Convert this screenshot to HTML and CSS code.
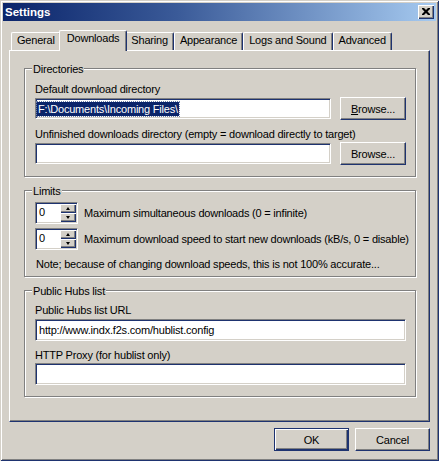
FILE: index.html
```html
<!DOCTYPE html>
<html>
<head>
<meta charset="utf-8">
<link rel="stylesheet" href="styles.css">
</head>
<body>
<div class="window">
  <div class="titlebar">
    <span class="title">Settings</span>
    <div class="close">
      <svg width="8" height="7" viewBox="0 0 8 7"><path d="M0 0h2l2 2 2-2h2v1l-2.5 2.5 2.5 2.5v1h-2l-2-2-2 2h-2v-1l2.5-2.5-2.5-2.5z" fill="#000"/></svg>
    </div>
  </div>
  <div class="body">
    <div class="tabs">
      <div class="tab">General</div>
      <div class="tab active">Downloads</div>
      <div class="tab">Sharing</div>
      <div class="tab">Appearance</div>
      <div class="tab">Logs and Sound</div>
      <div class="tab">Advanced</div>
    </div>
    <div class="panel">
      <div class="group g-dirs">
        <span class="legend">Directories</span>
        <div class="label">Default download directory</div>
        <div class="row">
          <div class="edit edit-dir"><span class="sel">F:\Documents\Incoming Files\</span></div>
          <div class="btn browse"><u>B</u>rowse...</div>
        </div>
        <div class="label label-gap">Unfinished downloads directory (empty = download directly to target)</div>
        <div class="row">
          <div class="edit edit-dir"></div>
          <div class="btn browse">Browse...</div>
        </div>
      </div>
      <div class="group g-limits">
        <span class="legend">Limits</span>
        <div class="spin-row">
          <div class="spin"><span class="spin-val">0</span><div class="updown"><div class="ud up"><i></i></div><div class="ud down"><i></i></div></div></div>
          <span class="spin-label">Maximum simultaneous downloads (0 = infinite)</span>
        </div>
        <div class="spin-row">
          <div class="spin"><span class="spin-val">0</span><div class="updown"><div class="ud up"><i></i></div><div class="ud down"><i></i></div></div></div>
          <span class="spin-label">Maximum download speed to start new downloads (kB/s, 0 = disable)</span>
        </div>
        <div class="label note">Note; because of changing download speeds, this is not 100% accurate...</div>
      </div>
      <div class="group g-hubs">
        <span class="legend">Public Hubs list</span>
        <div class="label">Public Hubs list URL</div>
        <div class="edit edit-wide url">http://www.indx.f2s.com/hublist.config</div>
        <div class="label label-gap">HTTP Proxy (for hublist only)</div>
        <div class="edit edit-wide"></div>
      </div>
    </div>
    <div class="buttons">
      <div class="btn dlg default">OK</div>
      <div class="btn dlg">Cancel</div>
    </div>
  </div>
</div>
</body>
</html>
```
FILE: styles.css
```css
* { box-sizing: border-box; }
body {
  margin: 0;
  font-family: "Liberation Sans", Arial, sans-serif;
  font-size: 11px;
  letter-spacing: -0.2px;
  color: #000;
  background: #d4d0c8;
}
.window {
  width: 439px;
  height: 461px;
  background: #d4d0c8;
  padding: 3px;
  display: flex;
  flex-direction: column;
  box-shadow: inset 1px 1px 0 #d4d0c8, inset -1px -1px 0 #1e3370, inset 2px 2px 0 #fff, inset -2px -2px 0 #808080;
}
.titlebar {
  height: 18px;
  flex: none;
  display: flex;
  align-items: center;
  justify-content: space-between;
  padding: 0 2px 0 2px;
  background: linear-gradient(to right, #0a246a 0%, #3a5a98 40%, #a6caf0 100%);
}
.title {
  color: #fff;
  font-weight: bold;
  letter-spacing: 0;
  font-size: 11.5px;
}
.close {
  width: 16px;
  height: 14px;
  background: #d4d0c8;
  box-shadow: inset 1px 1px 0 #fff, inset -1px -1px 0 #1e3370, inset -2px -2px 0 #808080;
  display: flex;
  align-items: center;
  justify-content: center;
  padding-bottom: 1px;
}
.body {
  flex: 1;
  padding: 9px 6px 0 6px;
  display: flex;
  flex-direction: column;
}
.tabs {
  display: flex;
  align-items: flex-end;
  height: 20px;
  padding-left: 2px;
  position: relative;
  z-index: 1;
}
.tab {
  height: 18px;
  padding: 0 5px;
  line-height: 14px;
  border-top: 1px solid #fff;
  border-left: 1px solid #fff;
  border-right: 1px solid #1e3370;
  box-shadow: inset -1px 0 0 #808080;
  border-radius: 2px 2px 0 0;
  background: #d4d0c8;
  white-space: nowrap;
}
.tab.active {
  height: 21px;
  margin: 0 -2px -1px -2px;
  padding: 0 7px;
  position: relative;
  z-index: 2;
}
.panel {
  height: 372px;
  flex: none;
  border-top: 1px solid #fff;
  border-left: 1px solid #fff;
  border-right: 1px solid #1e3370;
  border-bottom: 1px solid #1e3370;
  box-shadow: inset -1px -1px 0 #808080;
  padding: 17px 0 0 14px;
}
.group {
  position: relative;
  width: 392px;
  border: 1px solid #808080;
  box-shadow: inset 1px 1px 0 #fff, 1px 1px 0 #fff;
  padding-left: 10px;
}
.group + .group { margin-top: 13px; }
.g-dirs { padding-top: 13px; padding-bottom: 11px; }
.g-limits { padding-top: 11px; padding-bottom: 5px; }
.g-hubs { padding-top: 12px; padding-bottom: 11px; }
.legend {
  position: absolute;
  top: -6px;
  left: 7px;
  padding: 0 1px;
  line-height: 13px;
  background: #d4d0c8;
}
.label {
  line-height: 14px;
  height: 14px;
  white-space: nowrap;
  margin-bottom: 1px;
}
.label-gap { margin-top: 7px; }
.g-hubs .label:first-of-type { margin-bottom: 2px; }
.row {
  display: flex;
  align-items: center;
  gap: 9px;
  height: 23px;
}
.edit {
  height: 21px;
  background: #fff;
  border: 1px solid;
  border-color: #808080 #fff #fff #808080;
  box-shadow: inset 1px 1px 0 #1e3370, inset -1px -1px 0 #d4d0c8;
  padding: 0 2px;
  line-height: 19px;
  white-space: nowrap;
  overflow: hidden;
}
.edit-dir { width: 296px; }
.edit-wide { width: 371px; height: 22px; line-height: 20px; }
.url { padding-left: 3px; }
.sel {
  display: inline-block;
  background: #0a246a;
  color: #fff;
  line-height: 14px;
  margin-left: -1px;
  padding: 0 1px;
  vertical-align: middle;
  outline: 1px dotted #6d7fa8;
}
.btn {
  height: 23px;
  background: #d4d0c8;
  border: 1px solid;
  border-color: #fff #1e3370 #1e3370 #fff;
  box-shadow: inset -1px -1px 0 #808080;
  display: flex;
  align-items: center;
  justify-content: center;
  white-space: nowrap;
}
.browse { width: 66px; }
.spin-row {
  display: flex;
  align-items: center;
  height: 22px;
}
.spin-row + .spin-row { margin-top: 4px; }
.spin {
  width: 43px;
  height: 22px;
  display: flex;
  background: #fff;
  border: 1px solid;
  border-color: #808080 #fff #fff #808080;
  box-shadow: inset 1px 1px 0 #1e3370, inset -1px -1px 0 #d4d0c8;
  padding: 1px 1px 1px 1px;
}
.spin-val {
  flex: 1;
  padding-left: 2px;
  line-height: 17px;
}
.updown {
  width: 16px;
  display: flex;
  flex-direction: column;
}
.ud {
  flex: 1;
  background: #d4d0c8;
  box-shadow: inset 1px 1px 0 #fff, inset -1px -1px 0 #1e3370, inset -2px -2px 0 #808080;
  display: flex;
  align-items: center;
  justify-content: center;
}
.ud i {
  width: 0;
  height: 0;
  border-left: 2.5px solid transparent;
  border-right: 2.5px solid transparent;
}
.up i { border-bottom: 3px solid #000; margin-top: -1px; }
.down i { border-top: 3px solid #000; margin-top: -1px; }
.spin-label {
  margin-left: 6px;
  white-space: nowrap;
}
.note { margin-top: 7px; margin-bottom: 0; padding-left: 1px; }
.buttons {
  display: flex;
  justify-content: flex-end;
  gap: 6px;
  margin-top: 6px;
}
.dlg { width: 75px; }
.default {
  border: 1px solid #1e3370;
  box-shadow: inset 1px 1px 0 #fff, inset -1px -1px 0 #1e3370, inset -2px -2px 0 #808080;
}
```
